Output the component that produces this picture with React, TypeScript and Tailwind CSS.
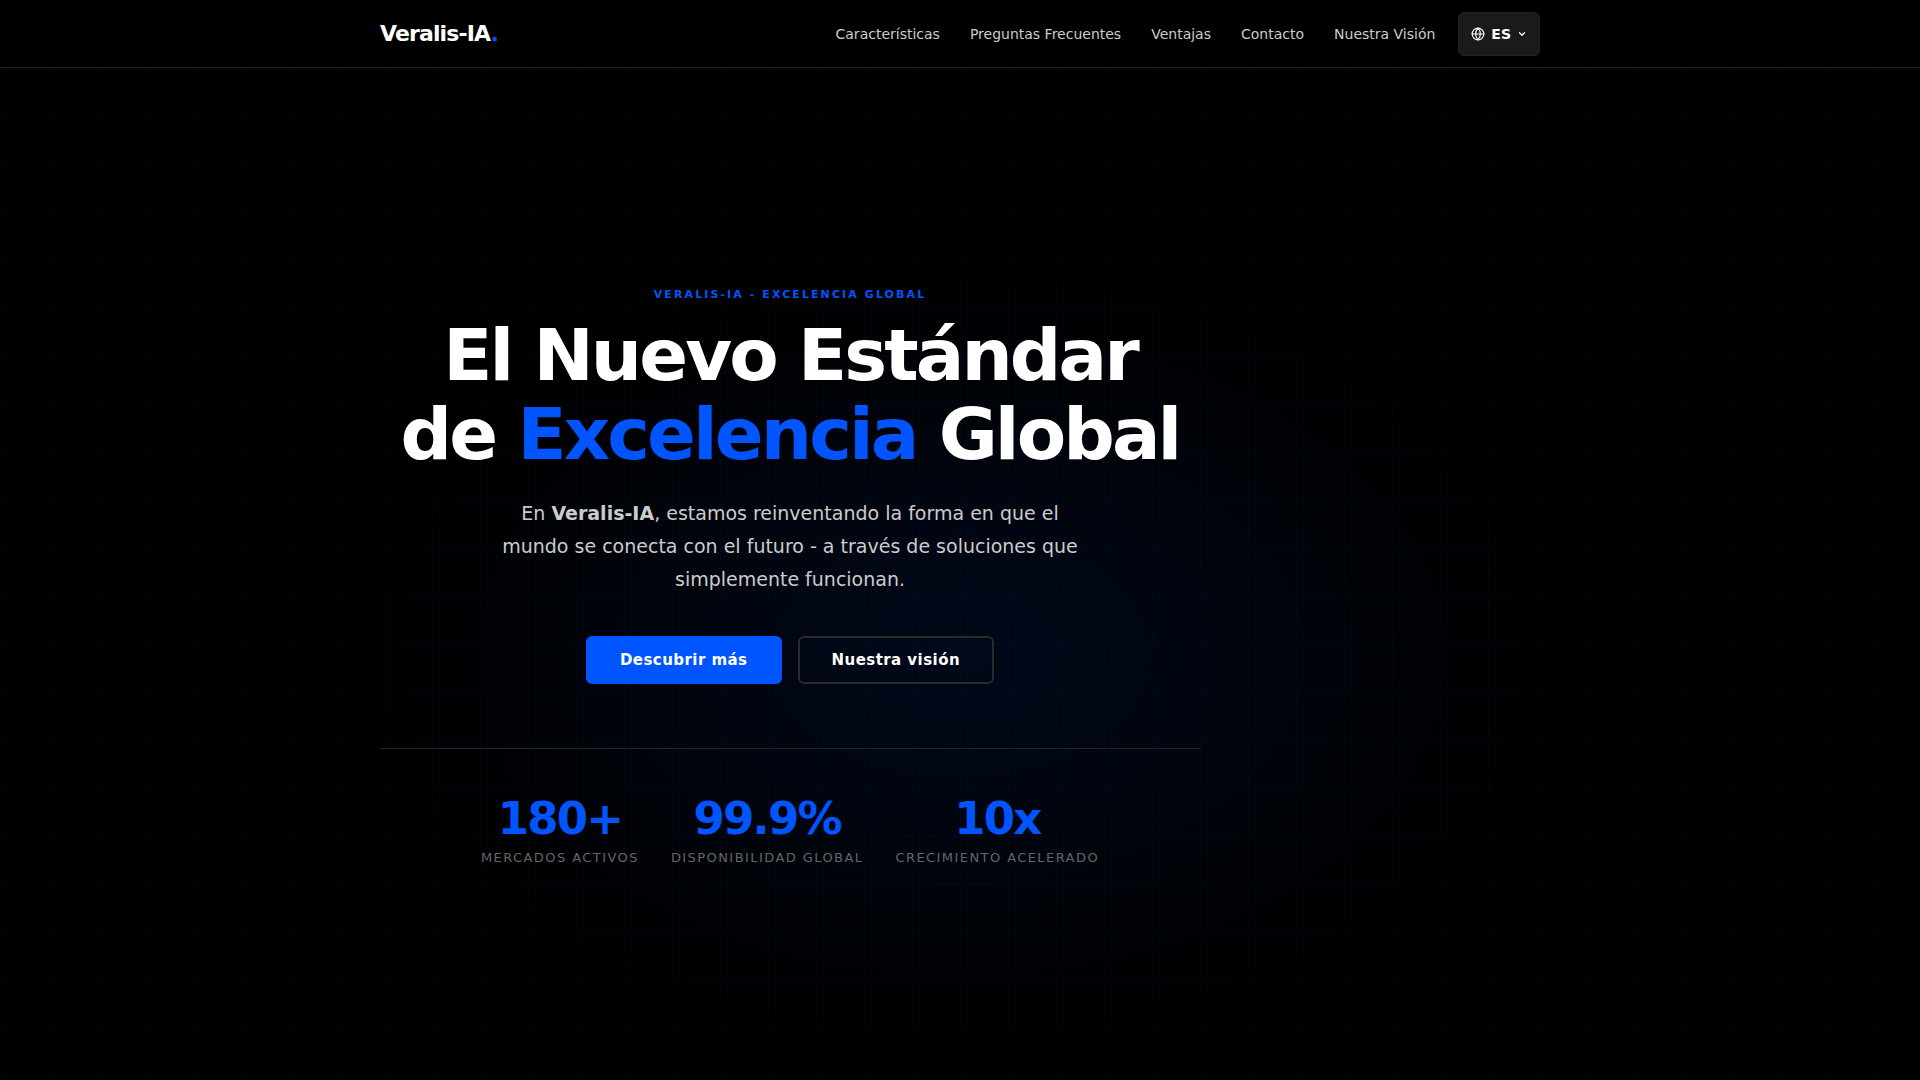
import { ChevronDown, Globe } from 'lucide-react';

const navLinks = [
  { label: 'Características', href: '#caracteristicas' },
  { label: 'Preguntas Frecuentes', href: '#faq' },
  { label: 'Ventajas', href: '#ventajas' },
  { label: 'Contacto', href: '#contacto' },
  { label: 'Nuestra Visión', href: '#vision' },
];

const stats = [
  { value: '180+', label: 'Mercados activos' },
  { value: '99.9%', label: 'Disponibilidad global' },
  { value: '10x', label: 'Crecimiento acelerado' },
];

function Header() {
  return (
    <header className="h-[68px] border-b border-[#222222] bg-black">
      <div className="mx-auto flex h-full max-w-[1200px] items-center justify-between px-5">
        <a href="#inicio" className="text-[22px] leading-8 font-bold tracking-[-0.04em] text-white">
          Veralis-IA<span className="text-[#0055ff]">.</span>
        </a>
        <div className="flex items-center gap-[23px]">
          <nav className="flex items-center gap-[30px]">
            {navLinks.map((link) => (
              <a key={link.href} href={link.href} className="text-sm text-[#cccccc] hover:text-white">
                {link.label}
              </a>
            ))}
          </nav>
          <button
            type="button"
            aria-haspopup="listbox"
            className="flex h-11 items-center gap-[6px] rounded-md border border-[#222222] bg-[#1a1a1a] px-3 text-sm font-bold text-white"
          >
            <Globe size={14} strokeWidth={2} />
            <span>ES</span>
            <ChevronDown size={10} strokeWidth={3} />
          </button>
        </div>
      </div>
    </header>
  );
}

function Hero() {
  return (
    <section
      id="inicio"
      className="relative flex min-h-[calc(100vh-68px)] flex-col justify-center overflow-hidden bg-black pt-[90px] pb-[84px]"
    >
      {/* Grid and glow behind the copy */}
      <div className="pointer-events-none absolute inset-0 bg-[linear-gradient(rgba(0,85,255,0.05)_1px,transparent_1px),linear-gradient(90deg,rgba(0,85,255,0.05)_1px,transparent_1px)] bg-[size:48px_48px]" />
      <div className="pointer-events-none absolute inset-0 bg-[radial-gradient(ellipse_580px_385px_at_50%_58%,rgba(0,85,255,0.1),transparent)]" />

      <div className="relative mx-auto w-full max-w-[1200px] px-5">
        <div className="max-w-[820px] text-center">
          <p className="text-[11px] leading-4 font-bold tracking-[0.19em] text-[#0055ff] uppercase">
            Veralis-IA - Excelencia Global
          </p>
          <h1 className="mt-[13px] text-7xl leading-[79px] font-black tracking-[-0.04em] text-white">
            El Nuevo Estándar
            <br />
            de <span className="text-[#0055ff]">Excelencia</span> Global
          </h1>
          <p className="mx-auto mt-[23px] max-w-[600px] text-[19px] leading-[33px] text-[#cccccc]">
            En <strong className="font-bold">Veralis-IA</strong>, estamos reinventando la forma en que el mundo se
            conecta con el futuro - a través de soluciones que simplemente funcionan.
          </p>
          <div className="mt-10 flex justify-center gap-4">
            <a
              href="#caracteristicas"
              className="flex h-12 items-center rounded-md border-2 border-[#0055ff] bg-[#0055ff] px-8 text-[15px] leading-6 font-bold tracking-[0.03em] text-white"
            >
              Descubrir más
            </a>
            <a
              href="#vision"
              className="flex h-12 items-center rounded-md border-2 border-[#2a2a2a] px-8 text-[15px] leading-6 font-bold tracking-[0.03em] text-white"
            >
              Nuestra visión
            </a>
          </div>
          <dl className="mt-16 flex justify-center gap-8 border-t border-[#242424] pt-[47px]">
            {stats.map((stat) => (
              <div key={stat.label} className="flex flex-col-reverse gap-[7px]">
                <dt className="text-[13px] leading-5 tracking-[0.11em] text-[#666666] uppercase">{stat.label}</dt>
                <dd className="text-[45px] leading-[45px] font-black tracking-[-0.04em] text-[#0055ff]">
                  {stat.value}
                </dd>
              </div>
            ))}
          </dl>
        </div>
      </div>
    </section>
  );
}

export default function App() {
  return (
    <div className="min-h-screen bg-black font-['DejaVu_Sans',sans-serif]">
      <Header />
      <Hero />
    </div>
  );
}
